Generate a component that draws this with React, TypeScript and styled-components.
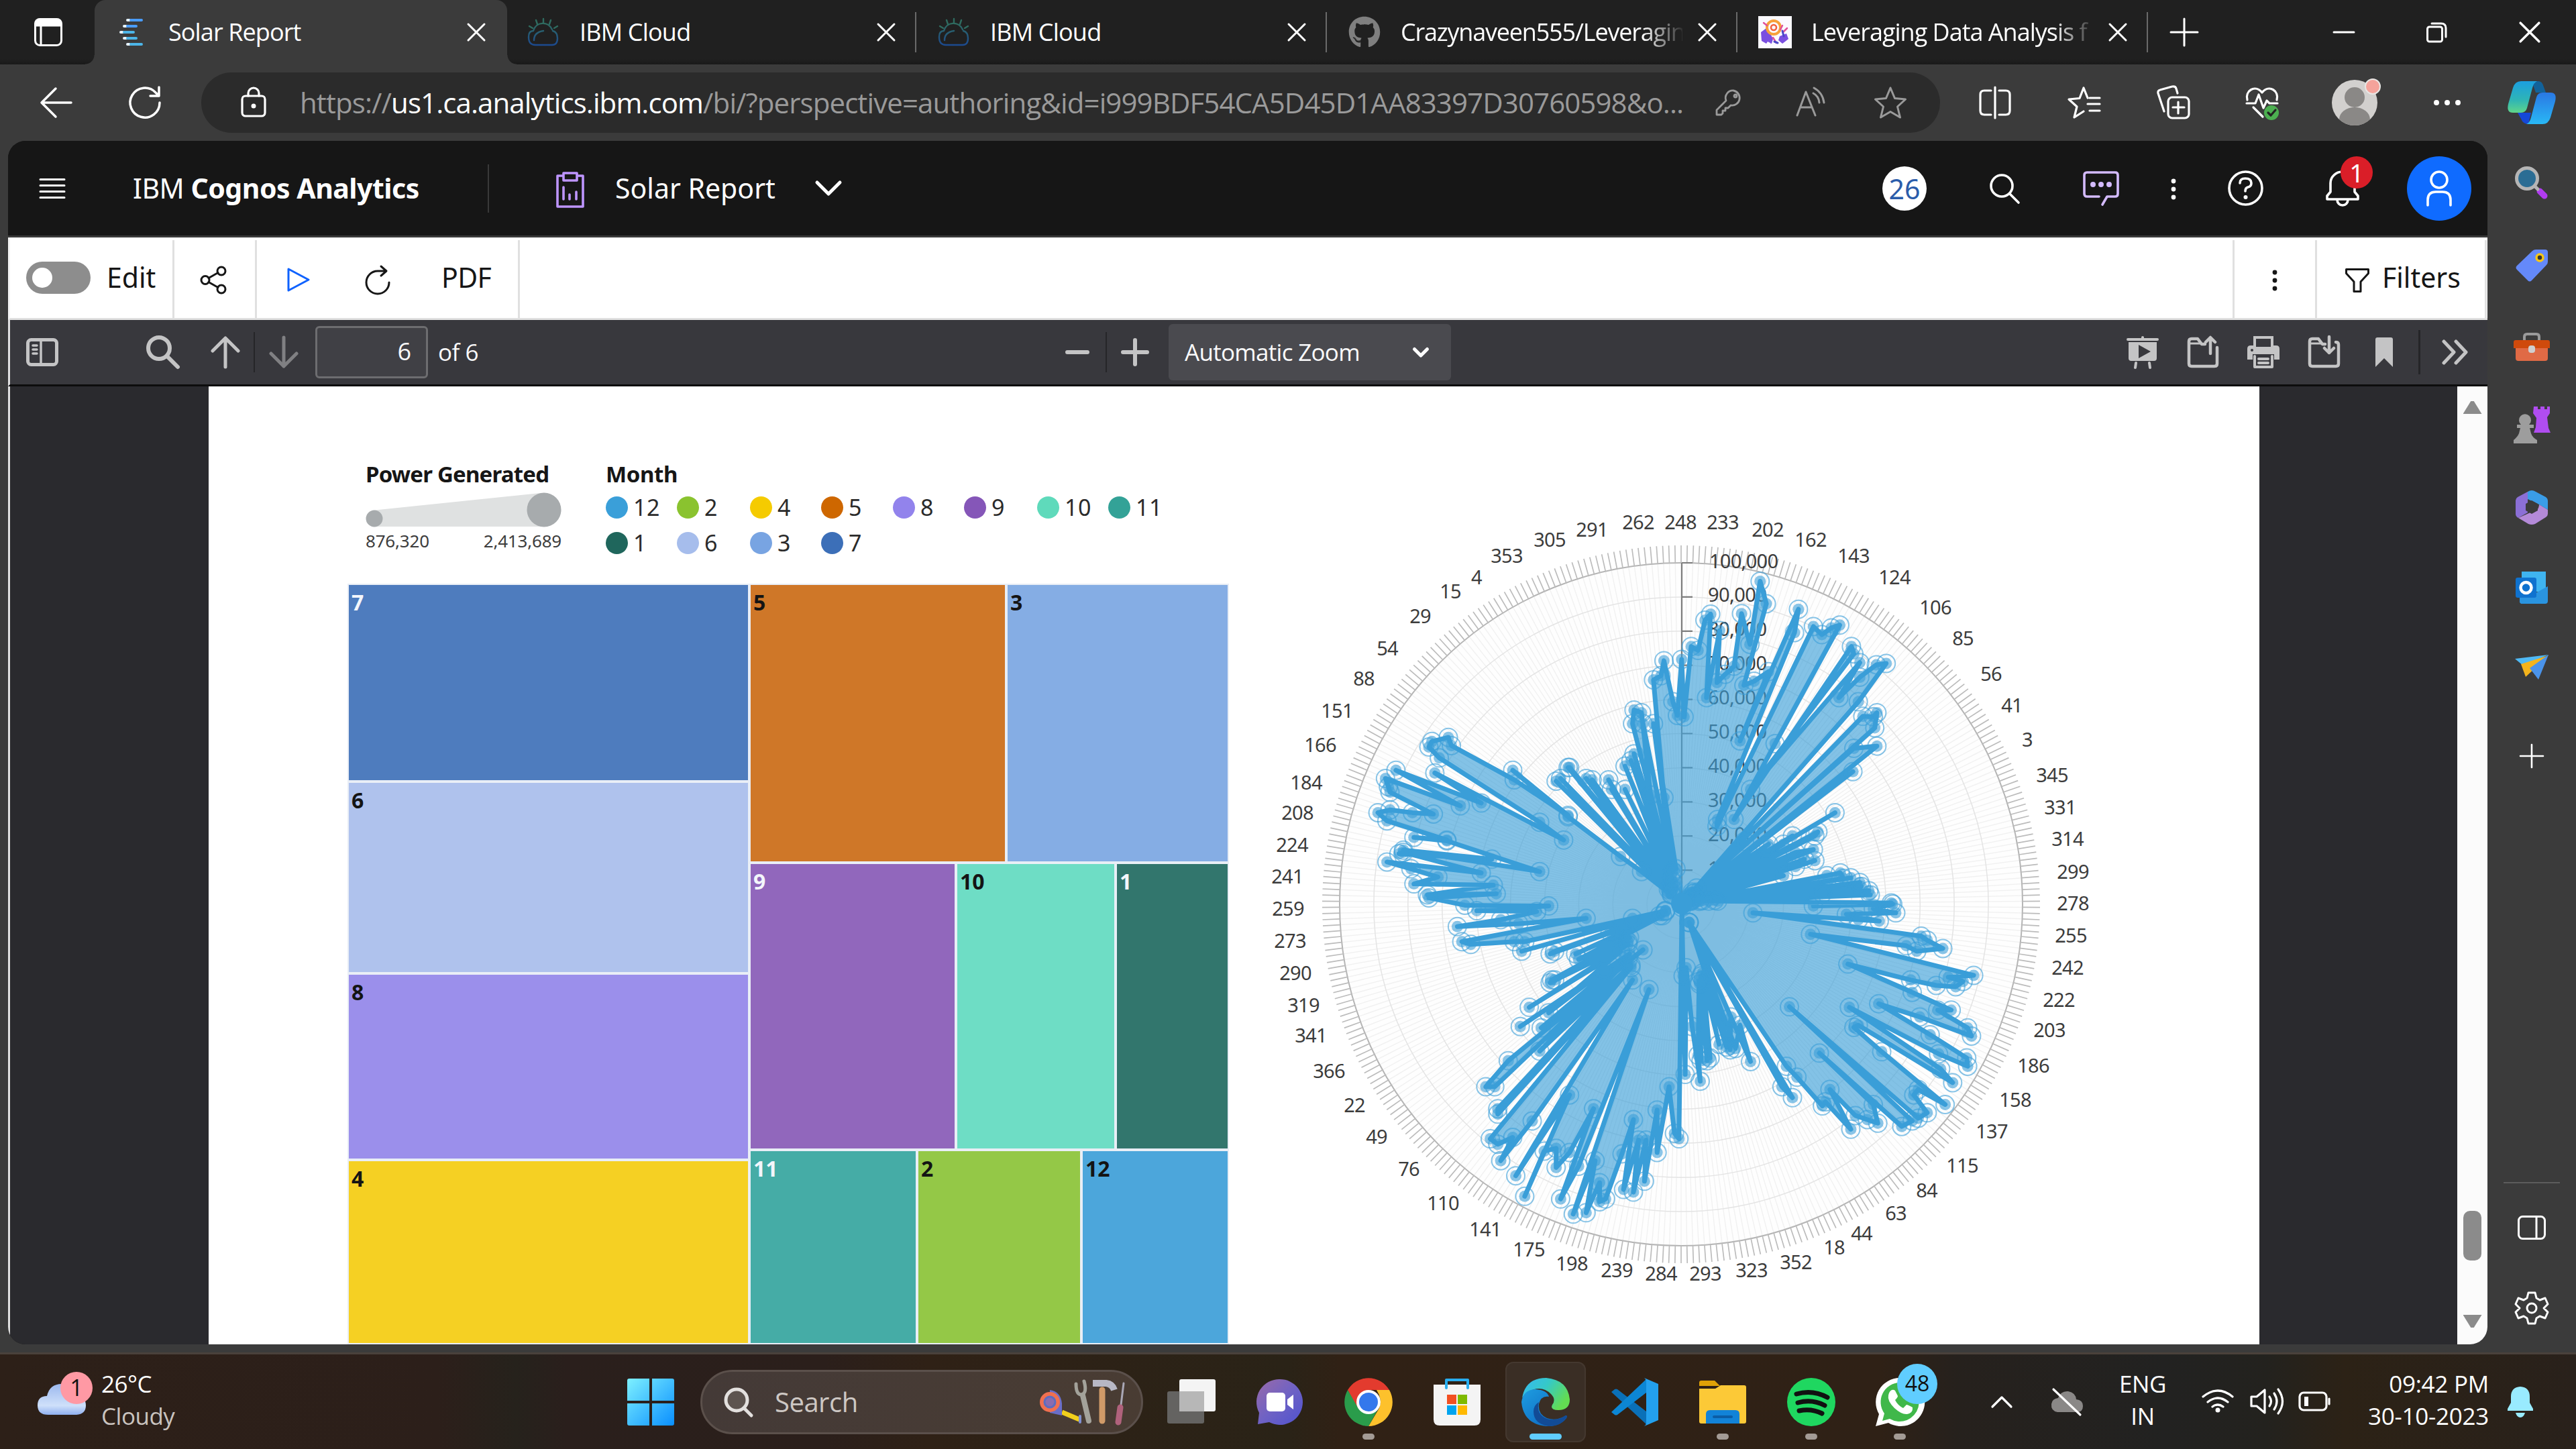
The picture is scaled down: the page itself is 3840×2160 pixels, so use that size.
import React from 'react';
import styled, { createGlobalStyle } from 'styled-components';
import { FaGithub } from 'react-icons/fa';

const GlobalStyle = createGlobalStyle`
  * { box-sizing: border-box; }
  body { margin: 0; background: #202020; }
`;

const UI = `"Open Sans", "Noto Sans", sans-serif`;
const PLEX = `"Noto Sans", "Open Sans", sans-serif`;

/* ---------- primitives ---------- */

const Glyph = styled.svg<{ $w: number; $h?: number; $ml?: number; $dy?: number }>`
  display: block;
  flex: none;
  width: ${(p) => p.$w}px;
  height: ${(p) => p.$h ?? p.$w}px;
  margin-left: ${(p) => p.$ml ?? 0}px;
  margin-top: ${(p) => (p.$dy ?? 0) * 2}px;
  overflow: visible;
  fill: none;
  stroke-linecap: round;
  stroke-linejoin: round;
`;

const Label = styled.span<{
  $ml?: number; $size: number; $ls?: number; $color?: string; $font?: string; $weight?: number; $w?: number; $dy?: number;
}>`
  flex: none;
  white-space: nowrap;
  margin-left: ${(p) => p.$ml ?? 0}px;
  margin-top: ${(p) => (p.$dy ?? 0) * 2}px;
  width: ${(p) => (p.$w ? `${p.$w}px` : 'auto')};
  font-family: ${(p) => p.$font ?? UI};
  font-size: ${(p) => p.$size}px;
  line-height: 1.3;
  letter-spacing: ${(p) => p.$ls ?? 0}px;
  font-weight: ${(p) => p.$weight ?? 400};
  color: ${(p) => p.$color ?? '#fff'};
`;

const Divider = styled.div<{ $h: number; $w?: number; $ml?: number; $color: string; $end?: boolean }>`
  flex: none;
  width: ${(p) => p.$w ?? 3}px;
  height: ${(p) => p.$h}px;
  margin-left: ${(p) => p.$ml ?? 0}px;
  background: ${(p) => p.$color};
  align-self: ${(p) => (p.$end ? 'flex-end' : 'center')};
`;

const Screen = styled.div`
  width: 3840px;
  height: 2160px;
  display: flex;
  flex-direction: column;
  background: #3b3b3b;
  overflow: hidden;
`;

/* ---------- tab strip ---------- */

const TabStrip = styled.div`
  height: 96px;
  flex: none;
  display: flex;
  align-items: center;
  background: linear-gradient(#202020 88px, #191919);
`;

const Tab = styled.div<{ $w: number; $active?: boolean; $ml?: number }>`
  position: relative;
  flex: none;
  width: ${(p) => p.$w}px;
  height: 96px;
  margin-left: ${(p) => p.$ml ?? 0}px;
  display: flex;
  align-items: center;
  background: ${(p) => (p.$active ? '#3b3b3b' : 'transparent')};
  border-radius: 16px 16px 0 0;
  &::before, &::after {
    content: ${(p) => (p.$active ? '""' : 'none')};
    position: absolute;
    bottom: 0;
    width: 14px;
    height: 14px;
  }
  &::before { left: -14px; background: radial-gradient(circle at 0 0, transparent 13px, #3b3b3b 14px); }
  &::after { right: -14px; background: radial-gradient(circle at 100% 0, transparent 13px, #3b3b3b 14px); }
`;

const Favicon = styled.div<{ $ml: number }>`
  flex: none;
  width: 48px;
  height: 48px;
  margin-left: ${(p) => p.$ml}px;
  display: flex;
  align-items: center;
  justify-content: center;
  color: #7f7f7f;
`;

const TabTitle = styled.div<{ $fade?: boolean; $ls: number }>`
  flex: none;
  width: 420px;
  margin-left: 30px;
  white-space: nowrap;
  font: 36px/50px ${UI};
  letter-spacing: ${(p) => p.$ls}px;
  color: #fff;
  mask-image: ${(p) => (p.$fade ? 'linear-gradient(90deg, #000 360px, transparent 424px)' : 'none')};
`;

const TabEdge = styled.div`
  width: 2px;
  height: 60px;
  margin-left: auto;
  background: #6a6a6a;
`;

const CloseIcon = ({ ml = 0, s = 26 }: { ml?: number; s?: number }) => (
  <Glyph $w={s} $ml={ml} viewBox="0 0 26 26" stroke="#fff" strokeWidth="3">
    <path d="M1 1 25 25M25 1 1 25" />
  </Glyph>
);

const CloudFavicon = () => (
  <Glyph $w={46} $h={42} viewBox="0 0 46 42" stroke="url(#cl)" strokeWidth="2.4">
    <defs>
      <linearGradient id="cl" x1="0" y1="0" x2="0" y2="1">
        <stop offset="0" stopColor="#2f6b5f" /><stop offset="1" stopColor="#1c4a8f" />
      </linearGradient>
    </defs>
    <path d="M11 40h25q8 0 8-10 0-9-7-11M11 40Q1 40 1 28q0-9 7-9C12 5 30 4 36 17M9 33q0-12 14-14" />
    <path d="M23 1v6M12 3l2 6M34 3l-2 6M2 12l5 3M44 12l-5 3" stroke="#2f6b5f" />
  </Glyph>
);

const ReportFavicon = () => (
  <Glyph $w={40} viewBox="0 0 40 40" strokeLinecap="butt" strokeWidth="4">
    <path stroke="#e8f4ff" d="M13 2h3M8 11h3M3 20h3M8 29h3M13 38h3" />
    <path stroke="#4a9dff" d="M18 2h16M13 11h13" />
    <path stroke="#4cb5e8" d="M8 20h14M13 29h13M18 38h16" />
  </Glyph>
);

const ProjectFavicon = () => (
  <Glyph $w={50} $h={48} viewBox="0 0 50 48">
    <path fill="#fbfaff" d="M0 0h50v48H0z" />
    <path fill="#7a4fe0" d="M4 24l8-6 5 6 5 10-2 7-6-3-2 3-7-4zM32 30l10-4 3 8-5 4-4 3-6-5zM16 34h4l-1 8z" />
    <circle cx="23" cy="17" r="10" stroke="#f7a13a" strokeWidth="4" />
    <circle cx="23" cy="17" r="4" stroke="#f2603c" strokeWidth="2.500" />
    <path stroke="#e0509a" strokeWidth="2.500" d="M8 10l5 4M36 14l-3 6M43 18l-6 6M22 32l5 8" />
    <path stroke="#4a48c8" strokeWidth="3" d="M36 22l2 8M24 38l5 2" />
  </Glyph>
);

const Titlebar = () => (
  <TabStrip>
    <Glyph $w={42} $ml={51} viewBox="0 0 42 42" stroke="#fff" strokeWidth="3">
      <rect x="1.5" y="1.5" width="39" height="39" rx="7" />
      <path fill="#fff" d="M2 11V8q0-6 6-6h26q6 0 6 6v3z" />
      <path d="M10 11v29" />
    </Glyph>
    <Tab $w={615} $ml={48} $active>
      <Favicon $ml={32}><ReportFavicon /></Favicon>
      <TabTitle $ls={-0.9}>Solar Report</TabTitle>
      <CloseIcon ml={26} />
    </Tab>
    <Tab $w={610}>
      <Favicon $ml={30}><CloudFavicon /></Favicon>
      <TabTitle $ls={-0.8}>IBM Cloud</TabTitle>
      <CloseIcon ml={24} />
      <TabEdge />
    </Tab>
    <Tab $w={612}>
      <Favicon $ml={32}><CloudFavicon /></Favicon>
      <TabTitle $ls={-0.8}>IBM Cloud</TabTitle>
      <CloseIcon ml={24} />
      <TabEdge />
    </Tab>
    <Tab $w={612}>
      <Favicon $ml={32}><FaGithub size={48} /></Favicon>
      <TabTitle $ls={-1.2} $fade>Crazynaveen555/Leveragin</TabTitle>
      <CloseIcon ml={24} />
      <TabEdge />
    </Tab>
    <Tab $w={612}>
      <Favicon $ml={32}><ProjectFavicon /></Favicon>
      <TabTitle $ls={-1} $fade>Leveraging Data Analysis f</TabTitle>
      <CloseIcon ml={24} />
      <TabEdge />
    </Tab>
    <Glyph $w={42} $ml={33} viewBox="0 0 42 42" stroke="#fff" strokeWidth="3">
      <path d="M21 1v40M1 21h40" />
    </Glyph>
    <Glyph $w={30} $ml={202} viewBox="0 0 30 30" stroke="#fff" strokeWidth="3" strokeLinecap="butt">
      <path d="M0 15h30" />
    </Glyph>
    <Glyph $w={30} $ml={108} viewBox="0 0 30 30" stroke="#fff" strokeWidth="3">
      <rect x="1.5" y="7" width="22" height="22" rx="3" />
      <path d="M8 2h14q7 0 7 7v13" />
    </Glyph>
    <CloseIcon ml={109} s={30} />
  </TabStrip>
);

/* ---------- address bar ---------- */

const NavRow = styled.div`
  height: 114px;
  flex: none;
  display: flex;
  align-items: center;
`;

const AddressPill = styled.div`
  flex: none;
  width: 2592px;
  height: 90px;
  margin-left: 60px;
  border-radius: 45px;
  background: #2b2b2b;
  display: flex;
  align-items: center;
`;

const Url = styled.div`
  flex: none;
  width: 2064px;
  margin-left: 50px;
  white-space: nowrap;
  font: 42px/60px ${UI};
  letter-spacing: -0.9px;
  color: #9a9a9a;
  b { font-weight: 400; color: #fff; }
`;

const star = 'M24 2l6.5 15.500 16 1.500-12 11 4 16L24 37.500 9.500 46l4-16-12-11 16-1.500z';

const AddressBar = () => (
  <NavRow>
    <Glyph $w={48} $ml={60} viewBox="0 0 48 48" stroke="#fff" strokeWidth="3.5">
      <path d="M46 24H2M23 3 2 24l21 21" />
    </Glyph>
    <Glyph $w={48} $ml={84} viewBox="0 0 48 48" stroke="#fff" strokeWidth="3.5">
      <path d="M46 24a22 22 0 1 1-6-15l5 5M45 1v13H32" />
    </Glyph>
    <AddressPill>
      <Glyph $w={38} $h={46} $ml={59} $dy={-1} viewBox="0 0 38 46" stroke="#fff" strokeWidth="3.2">
        <rect x="2" y="14" width="34" height="30" rx="5" />
        <path d="M11 14v-4a8 8 0 0 1 16 0v4" />
        <circle cx="19" cy="29" r="3.500" fill="#fff" stroke="none" />
      </Glyph>
      <Url>
        https://<b>us1.ca.analytics.ibm.com</b>/bi/?perspective=authoring&amp;id=i999BDF54CA5D45D1AA83397D30760598&amp;o...
      </Url>
      <Glyph $w={40} $ml={46} viewBox="0 0 40 40" stroke="#9a9a9a" strokeWidth="2.8">
        <path d="M27 2a11 11 0 1 1-4 22l-4 4h-4v4h-4v4l-2 2H2v-7l14-14A11 11 0 0 1 27 2z" />
        <circle cx="30" cy="10" r="2" />
      </Glyph>
      <Glyph $w={46} $h={44} $ml={80} $dy={-1} viewBox="0 0 46 44" stroke="#9a9a9a" strokeWidth="3">
        <path d="M2 42 15 7l14 35M7 30h17M27 1q13 7 15 22M26 9q8 4 9 14" />
      </Glyph>
      <Glyph $w={48} $ml={71} viewBox="0 0 48 48" stroke="#9a9a9a" strokeWidth="3"><path d={star} /></Glyph>
    </AddressPill>
    <Glyph $w={48} $ml={58} viewBox="0 0 48 48" stroke="#fff" strokeWidth="3.2">
      <path d="M24 1v46M18 6H8q-6 0-6 6v24q0 6 6 6h10M30 6h10q6 0 6 6v24q0 6-6 6H30" />
    </Glyph>
    <Glyph $w={50} $ml={84} viewBox="0 0 50 48" stroke="#fff" strokeWidth="3.2">
      <path d="M24 37 10 46l4-16-12-11 16-1.500L24 2l6 15M33 17h15M30 26h18M33 36h15" />
    </Glyph>
    <Glyph $w={50} $ml={83} viewBox="0 0 50 50" stroke="#fff" strokeWidth="3.2">
      <rect x="17" y="17" width="31" height="31" rx="6" />
      <path d="M32 24v17M24 32h17M11 38 2 11q-1-4 3-5l18-5q5-1 6 3l2 7" />
    </Glyph>
    <Glyph $w={50} $ml={82} viewBox="0 0 50 50" stroke="#fff" strokeWidth="3.2">
      <path d="M3 21C-1 8 14-3 25 10 36-3 51 8 47 21M2 26h13l5-13 7 20 5-11 4 4h12M12 32l14 14" />
      <circle cx="39" cy="40" r="11" fill="#4caf50" stroke="none" /><path stroke="#222" d="M34 40l4 4 7-8" />
    </Glyph>
    <Glyph $w={70} $ml={78} viewBox="0 0 70 70">
      <circle cx="35" cy="35" r="34" fill="#d2d0ce" />
      <path fill="#8a8886" d="M12 60a23 18 0 0 1 46 0 34 34 0 0 1-46 0z" />
      <circle cx="35" cy="27" r="15" fill="#8a8886" />
      <circle cx="62" cy="11" r="11" fill="#f5a39b" stroke="#e8e6e4" strokeWidth="2" />
    </Glyph>
    <Glyph $w={40} $h={10} $ml={83} viewBox="0 0 40 10">
      <g fill="#fff"><circle cx="4" cy="5" r="4" /><circle cx="20" cy="5" r="4" /><circle cx="36" cy="5" r="4" /></g>
    </Glyph>
    <Glyph $w={72} $h={64} $ml={70} viewBox="0 0 72 64">
      <defs>
        <linearGradient id="cpA" x1="0" y1="0" x2="0" y2="1"><stop stopColor="#1b9fe0" /><stop offset=".6" stopColor="#2fb5b5" /><stop offset="1" stopColor="#5fd58a" /></linearGradient>
        <linearGradient id="cpB" x1="0" y1="0" x2="0" y2="1"><stop stopColor="#2a78e4" /><stop offset="1" stopColor="#29b8f5" /></linearGradient>
      </defs>
      <path fill="#12629a" d="M36 0h10q5 0 7 6l4 11H42z" />
      <path fill="#1548d8" d="M15 47h20l-4 17q-8 0-11-8z" />
      <path fill="url(#cpA)" d="M20 0h24q-5 2-7 10l-8 30q-2 7-9 7H8Q-2 47 1 34L8 10Q11 0 20 0z" />
      <path fill="url(#cpB)" d="M52 64H28q5-2 7-10l8-30q2-7 9-7h12q10 0 7 13l-7 24q-3 10-12 10z" />
    </Glyph>
  </NavRow>
);

/* ---------- Cognos app ---------- */

const Body = styled.div`
  height: 1794px;
  flex: none;
  display: flex;
  padding-left: 12px;
`;

const AppPanel = styled.div`
  width: 3696px;
  flex: none;
  display: flex;
  flex-direction: column;
  border-radius: 26px;
  overflow: hidden;
  background: #161616;
`;

const AppHeader = styled.div`
  height: 144px;
  flex: none;
  display: flex;
  align-items: center;
  background: #161616;
  border-bottom: 3px solid #393939;
`;

const CountBadge = styled.div`
  flex: none;
  width: 66px;
  height: 66px;
  margin-left: 1552px;
  border-radius: 50%;
  background: #fff;
  display: flex;
  align-items: center;
  justify-content: center;
  font: 41px/66px ${PLEX};
  color: #2a5caa;
`;

const Bell = styled.div`
  position: relative;
  flex: none;
  margin-left: 93px;
`;

const AlertBadge = styled.span`
  position: absolute;
  left: 22px;
  top: -22px;
  width: 48px;
  height: 48px;
  border-radius: 50%;
  background: #da1e28;
  color: #fff;
  text-align: center;
  font: 38px/48px ${PLEX};
`;

const Avatar = styled.div`
  flex: none;
  width: 96px;
  height: 96px;
  margin-left: 71px;
  border-radius: 50%;
  background: #0f6bff;
  display: flex;
  align-items: center;
  justify-content: center;
`;

const Header = () => (
  <AppHeader>
    <Glyph $w={36} $h={30} $ml={48} viewBox="0 0 36 30" stroke="#fff" strokeWidth="3" strokeLinecap="butt">
      <path d="M0 1.500h36M0 10.500h36M0 19.500h36M0 28.500h36" />
    </Glyph>
    <Label $ml={102} $w={426} $size={41} $font={PLEX} $ls={-0.5}>IBM <b>Cognos Analytics</b></Label>
    <Divider $h={72} $ml={103} $w={2} $color="#393939" />
    <Glyph $w={42} $h={54} $ml={100} $dy={2} viewBox="0 0 42 54" stroke="#be95ff" strokeWidth="3.600">
      <path d="M11 6H2v46h38V6h-9M11 2h20v11H11zM11 23v18M20 34v7M30 30v11" />
    </Glyph>
    <Label $ml={46} $w={240} $size={41} $font={PLEX} $ls={0}>Solar Report</Label>
    <Glyph $w={38} $h={21} $ml={59} viewBox="0 0 38 21" stroke="#fff" strokeWidth="5" strokeLinecap="butt">
      <path d="M2 2l17 17L36 2" />
    </Glyph>
    <CountBadge>26</CountBadge>
    <Glyph $w={44} $ml={94} viewBox="0 0 44 44" stroke="#fff" strokeWidth="3.600">
      <circle cx="18" cy="18" r="16" /><path d="M30 30l13 13" />
    </Glyph>
    <Glyph $w={54} $h={50} $ml={95} viewBox="0 0 54 50" stroke="#d4bbff" strokeWidth="3.600">
      <path d="M24 37H6q-4 0-4-4V5q0-4 4-4h42q4 0 4 4v28q0 4-4 4H36l-7 12" />
      <g fill="#d4bbff" stroke="none"><circle cx="15" cy="19" r="4" /><circle cx="27" cy="19" r="4" /><circle cx="39" cy="19" r="4" /></g>
    </Glyph>
    <Glyph $w={8} $h={30} $ml={77} $dy={1} viewBox="0 0 8 30">
      <g fill="#fff"><circle cx="4" cy="3" r="3.400" /><circle cx="4" cy="15" r="3.400" /><circle cx="4" cy="27" r="3.400" /></g>
    </Glyph>
    <Glyph $w={53} $ml={77} viewBox="0 0 53 53" stroke="#fff" strokeWidth="3.600">
      <circle cx="26.500" cy="26.500" r="24.500" />
      <path d="M18 19q0-7 8-7 9 0 9 7 0 5-5 6-4 1-4 6" />
      <circle cx="26.500" cy="40" r="3" fill="#fff" stroke="none" />
    </Glyph>
    <Bell>
      <Glyph $w={50} $h={52} viewBox="0 0 50 52" stroke="#fff" strokeWidth="3.600">
        <path d="M2 42h46v-5l-5-6V18a18 17 0 0 0-36 0v13l-5 6zM17 43a8 8 0 0 0 16 0" />
      </Glyph>
      <AlertBadge>1</AlertBadge>
    </Bell>
    <Avatar>
      <Glyph $w={38} $h={54} viewBox="0 0 38 54" stroke="#fff" strokeWidth="3.600">
        <circle cx="19" cy="14" r="12" /><path d="M2 52V44q0-12 12-12h10q12 0 12 12v8" />
      </Glyph>
    </Avatar>
  </AppHeader>
);

const ReportBar = styled.div`
  height: 123px;
  flex: none;
  display: flex;
  align-items: center;
  background: #fff;
  border-bottom: 3px solid #e0e0e0;
  border-left: 3px solid #f4f4f4;
`;

const Toggle = styled.div`
  flex: none;
  width: 96px;
  height: 48px;
  margin-left: 24px;
  padding: 9px;
  border-radius: 24px;
  background: #8d8d8d;
  &::before {
    content: "";
    display: block;
    width: 30px;
    height: 30px;
    border-radius: 50%;
    background: #fff;
  }
`;

const Toolbar = () => (
  <ReportBar>
    <Toggle />
    <Label $ml={24} $w={76} $size={41} $font={PLEX} $color="#161616">Edit</Label>
    <Divider $h={116} $ml={22} $color="#e0e0e0" $end />
    <Glyph $w={40} $h={43} $ml={38} $dy={3} viewBox="0 0 40 43" stroke="#161616" strokeWidth="3">
      <circle cx="32" cy="8" r="6" /><circle cx="8" cy="21.500" r="6" /><circle cx="32" cy="35" r="6" />
      <path d="M13 18.500l14-8M13 24.500l14 8" />
    </Glyph>
    <Divider $h={116} $ml={42} $color="#e0e0e0" $end />
    <Glyph $w={34} $h={36} $ml={45} $dy={3} viewBox="0 0 34 36" stroke="#0f62fe" strokeWidth="3">
      <path d="M2 2l30 16L2 34z" />
    </Glyph>
    <Glyph $w={38} $h={44} $ml={82} $dy={3} viewBox="0 0 38 44" stroke="#161616" strokeWidth="3">
      <path d="M36 26a17 17 0 1 1-17-17h12M24 2l8 7-8 7" />
    </Glyph>
    <Label $ml={76} $w={78} $size={41} $font={PLEX} $ls={-0.6} $color="#161616">PDF</Label>
    <Divider $h={116} $ml={36} $color="#e0e0e0" $end />
    <Divider $h={116} $ml={2553} $color="#e0e0e0" $end />
    <Glyph $w={8} $h={30} $ml={56} $dy={4} viewBox="0 0 8 30">
      <g fill="#161616"><circle cx="4" cy="3" r="3.400" /><circle cx="4" cy="15" r="3.400" /><circle cx="4" cy="27" r="3.400" /></g>
    </Glyph>
    <Divider $h={116} $ml={56} $color="#e0e0e0" $end />
    <Glyph $w={36} $h={36} $ml={42} $dy={4} viewBox="0 0 36 36" stroke="#161616" strokeWidth="3">
      <path d="M1.500 1.500h33v6L23 20v14.500H13V20L1.500 7.500z" />
    </Glyph>
    <Label $ml={19} $w={120} $size={41} $font={PLEX} $ls={0} $color="#161616">Filters</Label>
    <Divider $h={116} $ml={33} $color="#e0e0e0" $end />
  </ReportBar>
);

/* ---------- PDF viewer ---------- */

const PdfBar = styled.div`
  height: 99px;
  flex: none;
  display: flex;
  align-items: center;
  background: #38383d;
  border-bottom: 3px solid #0c0c0d;
  border-left: 3px solid #e0e0e0;
`;

const PageInput = styled.div`
  flex: none;
  width: 168px;
  height: 78px;
  margin-left: 25px;
  padding-right: 22px;
  border: 3px solid #6d6d70;
  border-radius: 6px;
  background: #404045;
  color: #f9f9fa;
  text-align: right;
  font: 36px/70px ${UI};
`;

const ZoomSelect = styled.div`
  flex: none;
  width: 421px;
  height: 84px;
  margin-left: 29px;
  padding: 0 33px 0 24px;
  border-radius: 6px;
  background: #4a4a4f;
  display: flex;
  align-items: center;
  justify-content: space-between;
`;

const grey = '#c4c4c5';

const PdfToolbar = () => (
  <PdfBar>
    <Glyph $w={48} $h={42} $ml={24} viewBox="0 0 48 42" stroke={grey} strokeWidth="5">
      <rect x="2.500" y="2.500" width="43" height="37" rx="5" />
      <path strokeWidth="3.500" d="M22 4v34M10 11h6M10 17h6M10 23h6" />
    </Glyph>
    <Glyph $w={50} $h={50} $ml={131} viewBox="0 0 50 50" stroke={grey} strokeWidth="6">
      <circle cx="19" cy="19" r="16" /><path d="M31 31l16 16" />
    </Glyph>
    <Glyph $w={44} $h={48} $ml={46} viewBox="0 0 44 48" stroke={grey} strokeWidth="5">
      <path d="M22 46V3M3 22 22 3l19 19" />
    </Glyph>
    <Divider $h={60} $ml={20} $w={2} $color="#252528" />
    <Glyph $w={44} $h={48} $ml={21} viewBox="0 0 44 48" stroke="#808083" strokeWidth="5">
      <path d="M22 2v43M3 26l19 19 19-19" />
    </Glyph>
    <PageInput>6</PageInput>
    <Label $ml={15} $w={70} $size={35} $ls={-0.5} $color="#f9f9fa">of 6</Label>
    <Glyph $w={36} $h={6} $ml={865} viewBox="0 0 36 6" stroke={grey} strokeWidth="6"><path d="M3 3h30" /></Glyph>
    <Divider $h={60} $ml={24} $w={2} $color="#252528" />
    <Glyph $w={42} $ml={21} viewBox="0 0 42 42" stroke={grey} strokeWidth="6"><path d="M3 21h36M21 3v36" /></Glyph>
    <ZoomSelect>
      <Label $size={35} $ls={-0.7} $dy={-0.5} $color="#f9f9fa">Automatic Zoom</Label>
      <Glyph $w={24} $h={15} viewBox="0 0 24 15" stroke="#fff" strokeWidth="5"><path d="M2.500 2.500 12 12l9.500-9.500" /></Glyph>
    </ZoomSelect>
    <Glyph $w={48} $ml={1007} viewBox="0 0 48 48" stroke={grey} strokeWidth="4">
      <path d="M2 5h44M24 2v2M14 40l-1 7M34 40l1 7" />
      <path fill={grey} stroke="none" fillRule="evenodd" d="M3 9h42v24q0 4-4 4H7q-4 0-4-4zM18 13v20l18-10z" />
    </Glyph>
    <Glyph $w={48} $ml={42} viewBox="0 0 48 48" stroke={grey} strokeWidth="5">
      <path d="M45 17v24q0 4-4 4H7q-4 0-4-4V8q0-4 4-4h9l6 8h5M35 26V3M28 9l7-7 7 7" strokeWidth="4.500" />
      <path d="M4 11h18" strokeWidth="3" />
    </Glyph>
    <Glyph $w={48} $ml={42} viewBox="0 0 48 48">
      <path fill={grey} d="M9 0h30v14h4q5 0 5 5v16h-8v-8H8v8H0V19q0-5 5-5h4zM13 4v12h22V4z" fillRule="evenodd" />
      <path stroke={grey} strokeWidth="4" d="M11 30v16h26V30M17 34h14M17 40h14" />
      <circle cx="7" cy="21" r="2" fill="#38383d" />
    </Glyph>
    <Glyph $w={48} $ml={42} viewBox="0 0 48 48" stroke={grey} strokeWidth="4.500">
      <path d="M42 9q4 0 4 4v28q0 4-4 4H7q-4 0-4-4V8q0-4 4-4h9l6 8h4M32 1v24M25 18l7 7 7-7" />
      <path d="M4 11h18" strokeWidth="3" />
    </Glyph>
    <Glyph $w={26} $h={44} $ml={53} viewBox="0 0 26 44"><path fill={grey} d="M0 3q0-3 3-3h20q3 0 3 3v41L13 31 0 44z" /></Glyph>
    <Divider $h={66} $ml={38} $w={3} $color="#252528" />
    <Glyph $w={40} $h={36} $ml={32} viewBox="0 0 40 36" stroke={grey} strokeWidth="5">
      <path d="M3 2l15 16L3 34M21 2l15 16-15 16" />
    </Glyph>
  </PdfBar>
);

const Viewer = styled.div`
  height: 1428px;
  flex: none;
  display: flex;
  justify-content: space-between;
  background: #2a2a2e;
  border-left: 3px solid #e0e0e0;
`;

const Paper = styled.div`
  width: 3057px;
  margin-left: 296px;
  height: 1428px;
  background: #fff;
  display: flex;
  align-items: flex-start;
  overflow: hidden;
`;

const ScrollTrack = styled.div`
  width: 45px;
  background: #fbfbfb;
  display: flex;
  flex-direction: column;
  align-items: center;
`;

const Arrow = styled.div<{ $down?: boolean }>`
  width: 28px;
  height: 19px;
  margin-top: ${(p) => (p.$down ? 81 : 22)}px;
  background: #8b8b8b;
  clip-path: ${(p) => (p.$down ? 'polygon(0 0, 100% 0, 58% 100%, 42% 100%)' : 'polygon(42% 0, 58% 0, 100% 100%, 0 100%)')};
`;

const Thumb = styled.div`
  width: 27px;
  height: 74px;
  margin-top: 1188px;
  border-radius: 10px;
  background: #8b8b8b;
`;

const TreemapPanel = styled.div`
  width: 1314px;
  margin-left: 207px;
  padding-top: 110px;
  display: flex;
  flex-direction: column;
  flex: none;
`;

const LegendRow = styled.div`
  height: 184px;
  flex: none;
  display: flex;
  padding-left: 27px;
`;

const LegendBlock = styled.div<{ $w: number }>`
  flex: none;
  width: ${(p) => p.$w}px;
`;

const LegendTitle = styled.div<{ $ls: number }>`
  font: 700 33px/42px ${PLEX};
  letter-spacing: ${(p) => p.$ls}px;
  color: #161616;
`;

const RangeText = styled.div`
  display: flex;
  justify-content: space-between;
  width: 292px;
  margin-top: 3px;
  font: 26px/30px ${PLEX};
  letter-spacing: -0.2px;
  color: #3d3d3d;
`;

const MonthGrid = styled.div`
  display: grid;
  grid-template-columns: 106px 109px 106px 107px 106px 109px 106px 106px;
  grid-auto-rows: 53px;
  margin-top: 2px;
`;

const MonthItem = styled.div<{ $c: string }>`
  display: flex;
  align-items: center;
  gap: 8px;
  font: 34px/53px ${PLEX};
  letter-spacing: 0.5px;
  color: #2b2b2b;
  &::before {
    content: "";
    width: 33px;
    height: 33px;
    border-radius: 50%;
    background: ${(p) => p.$c};
  }
`;

const Treemap = styled.div`
  display: flex;
  height: 1134px;
`;

const TreeCol = styled.div<{ $w: number }>`
  width: ${(p) => p.$w}px;
  display: flex;
  flex-direction: column;
`;

const TreeRow = styled.div<{ $h: number }>`
  height: ${(p) => p.$h}px;
  display: flex;
  flex: none;
`;

const Tile = styled.div<{ $c: string; $w?: number; $h?: number; $light?: boolean }>`
  flex: none;
  width: ${(p) => (p.$w ? `${p.$w}px` : '100%')};
  height: ${(p) => (p.$h ? `${p.$h}px` : '100%')};
  border: 2px solid #e9eef6;
  background: ${(p) => p.$c};
  padding: 4px 0 0 4px;
  font: 700 32px/44px ${PLEX};
  color: ${(p) => (p.$light ? '#f3f6fb' : '#141414')};
`;

const months: [string, string][] = [
  ['12', '#3a9fd9'], ['2', '#8ac32f'], ['4', '#f5cb00'], ['5', '#ce6700'], ['8', '#9283ec'], ['9', '#8556b8'],
  ['10', '#5fdabb'], ['11', '#33a297'], ['1', '#1f665c'], ['6', '#a6bdec'], ['3', '#78a4e2'], ['7', '#3c6fb8'],
];

const TreemapWidget = () => (
  <TreemapPanel>
    <LegendRow>
      <LegendBlock $w={358}>
        <LegendTitle $ls={-0.8}>Power Generated</LegendTitle>
        <Glyph $w={292} $h={56} $dy={2} viewBox="0 0 292 56">
          <path fill="#dfe1e1" d="M9 29 260 3q30 20 4 50H12z" />
          <circle cx="13" cy="41" r="12.500" fill="#a7abad" />
          <circle cx="266" cy="28" r="25.500" fill="#a7abad" />
        </Glyph>
        <RangeText><span>876,320</span><span>2,413,689</span></RangeText>
      </LegendBlock>
      <LegendBlock $w={880}>
        <LegendTitle $ls={-0.4}>Month</LegendTitle>
        <MonthGrid>
          {months.map(([m, c]) => <MonthItem key={m} $c={c}>{m}</MonthItem>)}
        </MonthGrid>
      </LegendBlock>
    </LegendRow>
    <Treemap>
      <TreeCol $w={599}>
        <Tile $c="#4e7cbe" $h={295} $light>7</Tile>
        <Tile $c="#afc2ed" $h={286}>6</Tile>
        <Tile $c="#9b8feb" $h={278}>8</Tile>
        <Tile $c="#f5d023" $h={275}>4</Tile>
      </TreeCol>
      <TreeCol $w={715}>
        <TreeRow $h={416}>
          <Tile $c="#cf7728" $w={383}>5</Tile>
          <Tile $c="#85ade4" $w={332}>3</Tile>
        </TreeRow>
        <TreeRow $h={428}>
          <Tile $c="#9167bc" $w={308} $light>9</Tile>
          <Tile $c="#6eddc5" $w={238}>10</Tile>
          <Tile $c="#32766d" $w={169} $light>1</Tile>
        </TreeRow>
        <TreeRow $h={290}>
          <Tile $c="#45aca6" $w={250} $light>11</Tile>
          <Tile $c="#94c847" $w={245}>2</Tile>
          <Tile $c="#4ca6db" $w={220}>12</Tile>
        </TreeRow>
      </TreeCol>
    </Treemap>
  </TreemapPanel>
);

/* ---------- radial chart ---------- */

const RadialSvg = styled.svg`
  flex: none;
  width: 1300px;
  height: 1200px;
  margin: 164px 0 0 18px;
  font: 29px ${PLEX};
`;

const CX = 2506;
const CY = 1348;
const R = 509;

type Pt = [number, number];

/* Samples are kept per quarter, on a 2.24 x 2.45 grid measured from the quarter's own corner. */
const northEast: Pt[] = [
  [60, 595], [68, 805], [92, 548], [115, 562], [138, 452], [157, 430], [143, 735], [187, 490], [178, 680], [205, 650],
  [235, 620], [260, 428], [288, 540], [322, 310], [343, 392], [268, 690], [302, 675], [350, 640], [255, 893], [450, 412],
  [437, 497], [180, 1180], [178, 1205], [500, 475], [528, 505], [560, 480], [588, 470], [372, 903], [235, 1180], [627, 548],
  [635, 575], [290, 1070], [655, 607], [585, 735], [655, 660], [710, 615], [743, 610], [650, 750], [95, 1445], [665, 803],
  [700, 805], [712, 790], [705, 845], [110, 1430], [635, 920], [712, 912], [90, 1460], [632, 1005], [100, 1450], [270, 1260],
  [100, 1450], [350, 1270], [90, 1465], [340, 1290], [85, 1470], [430, 1240], [90, 1468], [400, 1270], [100, 1462], [572, 1155],
  [100, 1463], [515, 1225], [505, 1240], [90, 1473], [440, 1300], [500, 1290], [90, 1474], [470, 1325], [90, 1475], [505, 1330],
  [95, 1475], [440, 1352], [90, 1477], [400, 1385], [90, 1479], [545, 1385], [120, 1475], [590, 1375], [600, 1395], [130, 1476],
  [625, 1393], [120, 1479], [655, 1410], [150, 1478], [660, 1425], [170, 1475], [685, 1440], [530, 1450], [690, 1455], [180, 1478],
  [760, 1485],
];
const southEast: Pt[] = [
  [500, 75], [765, 68], [700, 85], [775, 100], [610, 105], [720, 130], [650, 125], [298, 100], [860, 185], [880, 200],
  [932, 230], [845, 240], [810, 220], [490, 178], [1035, 328], [950, 335], [1000, 350], [975, 370], [910, 365], [825, 345],
  [615, 287], [830, 390], [960, 455], [915, 455], [1015, 520], [1028, 550], [855, 480], [718, 432], [890, 545], [1012, 630],
  [1015, 660], [918, 615], [620, 445], [925, 670], [965, 720], [650, 510], [635, 518], [728, 607], [940, 800], [850, 745],
  [835, 765], [880, 830], [850, 850], [420, 443], [830, 860], [795, 880], [520, 612], [700, 800], [715, 868], [680, 855],
  [640, 840], [555, 745], [625, 890], [540, 790], [530, 805], [445, 700], [410, 660], [85, 135], [430, 775], [395, 735],
  [85, 135], [290, 643], [255, 510], [240, 595], [85, 135], [222, 600], [225, 480], [210, 590], [130, 320], [185, 580],
  [132, 345], [155, 630], [125, 330], [145, 640], [120, 360], [125, 640], [118, 350], [115, 620], [122, 715], [95, 515],
  [75, 300], [72, 690], [65, 330],
];
const southWest: Pt[] = [
  [1405, 80], [1395, 925], [1380, 905], [1362, 735], [1322, 975], [1322, 820], [1280, 1080], [1285, 930], [1243, 1120], [1260, 930],
  [1210, 1110], [1243, 855], [1205, 980], [1150, 1145], [1130, 1155], [1130, 1085], [1085, 1195], [1115, 1005], [1042, 1200], [1295, 380],
  [1060, 1025], [1000, 1145], [1110, 815], [1030, 975], [985, 1030], [985, 960], [945, 970], [880, 1135], [1030, 765], [850, 1060],
  [1240, 345], [905, 860], [800, 1005], [840, 920], [790, 945], [765, 925], [1235, 300], [790, 835], [790, 815], [1235, 290],
  [930, 605], [1225, 270], [780, 735], [750, 735], [825, 640], [1275, 235], [935, 520], [1230, 250], [865, 515], [1145, 310],
  [960, 465], [1200, 240], [895, 445], [1225, 215], [965, 355], [980, 345], [1225, 205], [970, 345], [1230, 190], [1060, 270],
  [1340, 110], [1050, 250], [1330, 110], [965, 250], [980, 240], [1350, 95], [1165, 170], [1350, 92], [870, 240], [1350, 92],
  [1240, 120], [880, 205], [845, 205], [700, 215], [670, 205], [1085, 120], [860, 140], [655, 150], [800, 125], [920, 95],
  [720, 92], [960, 75], [680, 72], [560, 45], [785, 30],
];
const northWest: Pt[] = [
  [555, 1455], [775, 1420], [510, 1415], [590, 1390], [500, 1360], [420, 1335], [735, 1375], [475, 1300], [460, 1305], [770, 1325],
  [475, 1292], [930, 1370], [620, 1258], [510, 1245], [620, 1255], [420, 1185], [390, 1155], [430, 1145], [505, 1155], [575, 1160],
  [430, 1080], [425, 1060], [415, 1030], [665, 1130], [450, 1000], [735, 1120], [580, 1010], [1010, 1255], [930, 1190], [595, 955],
  [560, 915], [570, 895], [625, 880], [635, 910], [845, 1035], [1025, 1165], [840, 1000], [1025, 1170], [1200, 1315], [1270, 1370],
  [1370, 1455], [985, 1040], [1370, 1452], [1000, 1030], [1360, 1435], [1025, 990], [1370, 1445], [1030, 990], [1365, 1432], [1085, 1030],
  [1370, 1435], [1105, 1035], [1370, 1430], [1160, 1035], [1375, 1435], [1170, 1070], [1375, 1430], [1215, 1070], [1375, 1425], [1215, 985],
  [1370, 1400], [1235, 965], [1375, 1410], [1245, 940], [1370, 1380], [1240, 830], [1245, 780], [1270, 790], [1300, 1090], [1275, 830],
  [1375, 1370], [1310, 830], [1385, 1360], [1345, 1100], [1310, 670], [1335, 655], [1345, 600], [1375, 750], [1390, 800],
];

const place = (pts: Pt[], ox: number, oy: number): Pt[] =>
  pts.map(([x, y]) => [+(ox + x / 2.24).toFixed(1), +(oy + y / 2.45).toFixed(1)]);

const outline: Pt[] = [
  ...place(northEast, 2480, 740),
  ...place(southEast, 2480, 1320),
  ...place(southWest, 1880, 1320),
  ...place(northWest, 1880, 740),
];

const dayLabels: [number, number, number][] = [
  [248, 2505, 778], [233, 2568, 778], [202, 2635, 789], [162, 2699, 804], [143, 2763, 828], [124, 2824, 860], [106, 2885, 905],
  [85, 2926, 951], [56, 2968, 1004], [41, 2999, 1051], [3, 3022, 1102], [345, 3059, 1155], [331, 3071, 1203], [314, 3082, 1250],
  [299, 3090, 1299], [278, 3090, 1346], [255, 3087, 1394], [242, 3082, 1442], [222, 3069, 1490], [203, 3055, 1535],
  [186, 3031, 1588], [158, 3004, 1639], [137, 2969, 1686], [115, 2925, 1737], [84, 2872, 1774], [63, 2826, 1808],
  [44, 2775, 1838], [18, 2734, 1859], [352, 2677, 1881], [323, 2611, 1893], [293, 2542, 1898], [284, 2476, 1898],
  [239, 2410, 1893], [198, 2343, 1883], [175, 2279, 1862], [141, 2214, 1832], [110, 2151, 1793], [76, 2100, 1742],
  [49, 2052, 1694], [22, 2019, 1647], [366, 1981, 1596], [341, 1954, 1543], [319, 1943, 1498], [290, 1931, 1450],
  [273, 1923, 1402], [259, 1920, 1354], [241, 1919, 1306], [224, 1926, 1259], [208, 1934, 1211], [184, 1947, 1166],
  [166, 1968, 1110], [151, 1993, 1059], [88, 2033, 1011], [54, 2068, 966], [29, 2117, 918], [15, 2162, 881],
  [4, 2201, 860], [353, 2246, 828], [305, 2310, 804], [291, 2373, 789], [262, 2442, 778],
];

const rays = (from: number, to: number) =>
  Array.from({ length: 366 }, (_, i) => {
    const a = (i / 366) * Math.PI * 2;
    const s = Math.sin(a);
    const c = -Math.cos(a);
    return `M${(CX + s * from).toFixed(1)} ${(CY + c * from).toFixed(1)}L${(CX + s * to).toFixed(1)} ${(CY + c * to).toFixed(1)}`;
  }).join('');

const steps = Array.from({ length: 10 }, (_, i) => i + 1);
const BLUE = '#3a9ed8';

const RadialChart = () => (
  <RadialSvg viewBox="1850 740 1300 1200">
    <circle cx={CX} cy={CY} r={R} fill="#fefefe" />
    <path d={rays(20, R)} stroke="#000" strokeOpacity="0.05" strokeWidth="1.500" />
    <g fill="none" stroke="#e4e4e4" strokeWidth="1.500">
      {steps.slice(0, 9).map((s) => <circle key={s} cx={CX} cy={CY} r={s * 50.9} />)}
    </g>
    <circle cx={CX} cy={CY} r={R} fill="none" stroke="#b5b5b5" strokeWidth="2" />
    <path d={rays(R, R + 26)} stroke="#bcbcbc" strokeWidth="1.700" />
    <path d={`M${CX + 1} ${CY}V839` + steps.map((s) => `M${CX + 1} ${CY - s * 50.9}h16`).join('')} stroke="#7d7d7d" strokeWidth="2.200" fill="none" />
    <g fill="#3c3c3c" dominantBaseline="central">
      {steps.map((s) => (
        <text key={s} x={s === 10 ? 2548 : 2546} y={1344 - s * 50.9} textLength={s === 10 ? 103 : 88}>
          {`${s * 10},000`}
        </text>
      ))}
    </g>
    <polygon points={outline.map((p) => p.join(',')).join(' ')} fill={BLUE} fillOpacity="0.63" stroke={BLUE} strokeWidth="7" strokeLinejoin="round" />
    <g>
      {outline.map(([x, y], i) => (
        <g key={i}>
          <circle cx={x} cy={y} r="13.500" fill="none" stroke={BLUE} strokeOpacity="0.6" strokeWidth="2" />
          <circle cx={x} cy={y} r="8.500" fill={BLUE} fillOpacity="0.6" />
        </g>
      ))}
    </g>
    <circle cx={CX + 1} cy={CY - 1} r="16" fill={BLUE} />
    <g fill="#3c3c3c" textAnchor="middle" dominantBaseline="central">
      {dayLabels.map(([d, x, y]) => (
        <text key={d} x={x} y={y - 1} letterSpacing="-0.8">{d}</text>
      ))}
    </g>
  </RadialSvg>
);

/* ---------- Edge sidebar ---------- */

const SideRail = styled.div`
  flex: none;
  width: 132px;
  display: flex;
  flex-direction: column;
  align-items: center;
  padding-top: 3px;
`;

const RailItem = styled.div<{ $h?: number }>`
  flex: none;
  height: ${(p) => p.$h ?? 120}px;
  display: flex;
  align-items: center;
`;

const RailRule = styled.div`
  width: 84px;
  height: 3px;
  margin-top: 561px;
  background: #5c5c5c;
`;

const Sidebar = () => (
  <SideRail>
    <RailItem>
      <Glyph $w={50} viewBox="0 0 50 50">
        <path stroke="#b13cf0" strokeWidth="9" d="M37 37l7 7" /><path stroke="#b5b5b5" strokeWidth="5" d="M29 29l5 5" />
        <circle cx="18" cy="18" r="15.500" fill="#2b6d94" stroke="#b5b5b5" strokeWidth="5" />
      </Glyph>
    </RailItem>
    <RailItem>
      <Glyph $w={48} $dy={3} viewBox="0 0 48 48">
        <path fill="#6489fa" d="M25 2q2-2 5-2h14q4 0 4 4v14q0 3-2 5L24 46q-3 3-6 0L2 30q-3-3 0-6z" />
        <circle cx="36" cy="12" r="5" fill="#333" stroke="#f5c518" strokeWidth="3.500" />
      </Glyph>
    </RailItem>
    <RailItem>
      <Glyph $w={54} $h={42} $dy={4} viewBox="0 0 54 42">
        <path stroke="#9a9a9a" strokeWidth="4" d="M16 12V6q0-4 4-4h14q4 0 4 4v6" />
        <path fill="#e06a45" d="M3 20h48v18q0 4-4 4H7q-4 0-4-4z" /><path fill="#cf4a0c" d="M3 11h48q3 0 3 3v9H0v-9q0-3 3-3z" />
        <rect x="22" y="19" width="10" height="11" rx="4" fill="#cfcfcf" />
      </Glyph>
    </RailItem>
    <RailItem>
      <Glyph $w={54} $h={56} $dy={1} viewBox="0 0 54 56">
        <path fill="#b04df0" d="M30 0h6v4h4V0h6v4h4V0h4v10l-4 6 2 16 3 7H30l3-8 1-14-5-7z" />
        <path fill="#9d9d9d" d="M0 55v-5q6-5 8-10l2-8H5v-5h6a9 9 0 1 1 12 0h7v5h-6l2 8q2 6 9 10v5z" />
      </Glyph>
    </RailItem>
    <RailItem>
      <Glyph $w={48} $h={52} $dy={3} viewBox="0 0 48 52">
        <path fill="#8b6fd6" d="M18 3 3 11q-3 2-3 5v20q0 4 4 6l14-8V14z" />
        <path fill="#3a9de8" d="M18 3q6-4 12 0l15 8q3 2 3 6v13l-13-8-17-8z" />
        <path fill="#b48ad8" d="M35 22l13 8v6q0 3-3 5l-16 10q-5 2-10 0L4 42l18-8q13-2 13-12z" />
        <path fill="#3b3b3b" d="M24 16l9 5v10l-9 5-9-5V21z" />
      </Glyph>
    </RailItem>
    <RailItem>
      <Glyph $w={48} $h={48} $dy={3} viewBox="0 0 48 48">
        <path fill="#3fb4f0" d="M9 0h36v30H9z" /><path fill="#1a6fc0" d="M9 14h18v16H9z" />
        <path fill="#2a94e0" d="M6 46V22l20 12 22-12v22q0 4-4 4H8z" />
        <rect y="9" width="31" height="30" rx="3" fill="#0f72cf" /><circle cx="15.500" cy="24" r="8" stroke="#fff" strokeWidth="4.500" />
      </Glyph>
    </RailItem>
    <RailItem>
      <Glyph $w={50} $h={38} $dy={2} viewBox="0 0 50 38">
        <path fill="#4fb9f5" d="M0 6 50 0 12 16z" /><path fill="#f4b41c" d="M9 14 50 1 16 33z" /><path fill="#4a93ea" d="M50 0 22 20l13 17z" />
      </Glyph>
    </RailItem>
    <RailItem $h={148}>
      <Glyph $w={36} viewBox="0 0 36 36" stroke="#fff" strokeWidth="2.600"><path d="M18 1v34M1 18h34" /></Glyph>
    </RailItem>
    <RailRule />
    <RailItem $h={132}>
      <Glyph $w={42} $h={36} viewBox="0 0 42 36" stroke="#fff" strokeWidth="3"><rect x="1.500" y="1.500" width="39" height="33" rx="6" /><path d="M28 2v32" /></Glyph>
    </RailItem>
    <RailItem $h={108}>
      <Glyph $w={50} viewBox="0 0 50 50" stroke="#fff" strokeWidth="3">
        <path d="M20 2h10l2 8 5 3 8-3 4 9-6 6 6 6-4 9-8-3-5 3-2 8H20l-2-8-5-3-8 3-4-9 6-6-6-6 4-9 8 3 5-3z" />
        <circle cx="25" cy="25" r="7" />
      </Glyph>
    </RailItem>
  </SideRail>
);

/* ---------- taskbar ---------- */

const FrameEdge = styled.div`
  height: 12px;
  flex: none;
`;

const TaskRow = styled.div`
  height: 144px;
  flex: none;
  display: flex;
  align-items: center;
  border-top: 3px solid #4a413b;
  background: linear-gradient(90deg, #2d2018 0, #2c1f1a 17%, #26221c 20%, #2a1f1c 22%, #2b1f1b 32%, #2f2116 36%,
    #2a2317 50%, #302115 52%, #2f2116 73%, #26211d 76%, #222221 84%, #23221e 88%, #2c2216 91%, #29211b 100%);
`;

const Weather = styled.div`
  position: relative;
  flex: none;
  margin-left: 56px;
  width: 72px;
`;

const PinkBadge = styled.span`
  position: absolute;
  left: 34px;
  top: -26px;
  width: 48px;
  height: 48px;
  border-radius: 50%;
  background: #ff99a4;
  color: #111;
  text-align: center;
  font: 34px/46px ${UI};
`;

const TwoLines = styled.div<{ $ml: number; $w: number; $align?: string; $ls?: number; $dim?: boolean }>`
  flex: none;
  width: ${(p) => p.$w}px;
  margin-left: ${(p) => p.$ml}px;
  margin-top: -5px;
  display: flex;
  flex-direction: column;
  text-align: ${(p) => p.$align ?? 'left'};
  white-space: nowrap;
  font: 35px/48px ${UI};
  letter-spacing: ${(p) => p.$ls ?? -0.6}px;
  color: #fff;
  span + span { color: ${(p) => (p.$dim ? '#c9c3bf' : '#fff')}; }
`;

const SearchBox = styled.div`
  flex: none;
  width: 660px;
  height: 96px;
  margin-left: 39px;
  border: 3px solid #5b504b;
  border-radius: 48px;
  background: linear-gradient(90deg, #443a37, #493c33);
  display: flex;
  align-items: center;
`;

const AppSlot = styled.div<{ $active?: boolean; $dot?: string; $dotW?: number }>`
  position: relative;
  flex: none;
  width: 120px;
  height: 120px;
  margin-right: 12px;
  display: flex;
  align-items: center;
  justify-content: center;
  border-radius: 12px;
  background: ${(p) => (p.$active ? '#3a2e25' : 'transparent')};
  box-shadow: ${(p) => (p.$active ? 'inset 0 0 0 2px #44382f' : 'none')};
  &::after {
    content: ${(p) => (p.$dot ? '""' : 'none')};
    position: absolute;
    bottom: 4px;
    left: calc(50% - ${(p) => (p.$dotW ?? 18) / 2}px);
    width: ${(p) => p.$dotW ?? 18}px;
    height: 9px;
    border-radius: 5px;
    background: ${(p) => p.$dot};
  }
`;

const CountPill = styled.span`
  position: absolute;
  left: 56px;
  top: 3px;
  width: 60px;
  height: 60px;
  border-radius: 50%;
  background: #60cdff;
  color: #111;
  text-align: center;
  font: 32px/58px ${UI};
`;

const AppRow = styled.div`
  flex: none;
  display: flex;
  margin-left: 12px;
`;

const Taskbar = () => (
  <TaskRow>
    <Weather>
      <Glyph $w={72} $h={46} viewBox="0 0 72 46" $dy={-4}>
        <defs><linearGradient id="wc" x1="0" y1="0" x2="0" y2="1"><stop stopColor="#9bb8ee" /><stop offset=".7" stopColor="#cfe0fa" /><stop offset="1" stopColor="#8fb0f0" /></linearGradient></defs>
        <path fill="url(#wc)" d="M16 46Q0 46 0 32t14-14Q18 0 36 0q20 0 22 18 14 1 14 14T58 46z" />
      </Glyph>
      <PinkBadge>1</PinkBadge>
    </Weather>
    <TwoLines $ml={23} $w={120} $dim $ls={-0.5}><span>26°C</span><span>Cloudy</span></TwoLines>
    <Glyph $w={70} $ml={664} viewBox="0 0 70 70">
      <defs><linearGradient id="win" x1="0" y1="0" x2="1" y2="1"><stop stopColor="#7df0ff" /><stop offset="1" stopColor="#0a8fff" /></linearGradient></defs>
      <path fill="url(#win)" d="M3 0h30v33H0V3q0-3 3-3zM37 0h30q3 0 3 3v30H37zM0 37h33v33H3q-3 0-3-3zM37 37h33v30q0 3-3 3H37z" />
    </Glyph>
    <SearchBox>
      <Glyph $w={44} $ml={31} viewBox="0 0 44 44" stroke="#e3e0de" strokeWidth="5"><circle cx="20" cy="19" r="16" fill="#5d544f" /><path d="M31 31l11 11" /></Glyph>
      <Label $ml={33} $w={126} $size={40} $ls={-0.5} $color="#cdc7c3">Search</Label>
      <Glyph $w={132} $h={68} $ml={268} viewBox="0 0 132 68">
        <path stroke="#f1cf1c" strokeWidth="7" strokeLinecap="butt" d="M34 49 60 60" /><path stroke="#8090d0" strokeWidth="4" d="M61 55v9" />
        <path fill="#6a6ec8" d="M16 16q16 2 18 20v18L16 50z" /><circle cx="16" cy="34" r="15" fill="#f07050" /><circle cx="16" cy="34" r="8" stroke="#5d6cc0" strokeWidth="3" fill="#8a6cb0" />
        <path stroke="#a3a29a" strokeWidth="8" d="M65 24l9 38" /><path stroke="#a3a29a" strokeWidth="5" d="M55 7q0 16 8 16 9-2 4-20" />
        <path stroke="#d09a68" strokeWidth="9" d="M94 16v46" /><path stroke="#b7b7c4" strokeWidth="10" strokeLinecap="butt" d="M80 6h20q9 1 12 10" />
        <path stroke="#a9a7b5" strokeWidth="3" d="M126 6l-4 32" /><path stroke="#b0627c" strokeWidth="9" d="M121 42l-3 22" />
      </Glyph>
    </SearchBox>
    <AppRow>
      <AppSlot>
        <Glyph $w={72} $h={66} $dy={-1} viewBox="0 0 72 66">
          <rect x="18" width="54" height="48" rx="3" fill="#f4f4f4" /><rect y="18" width="55" height="48" rx="3" fill="#6e6e6e" fillOpacity=".85" />
          <path fill="#b7b7b7" d="M18 18h37v30H18z" />
        </Glyph>
      </AppSlot>
      <AppSlot>
        <Glyph $w={68} viewBox="0 0 68 68">
          <defs><linearGradient id="tm" x1="0" y1="0" x2="1" y2="1"><stop stopColor="#9a6aa8" /><stop offset=".5" stopColor="#6f62c4" /><stop offset="1" stopColor="#4f52d0" /></linearGradient></defs>
          <path fill="url(#tm)" d="M34 0a34 34 0 1 1-16 64L1 67l2-17A34 34 0 0 1 34 0z" /><rect x="14" y="20" width="28" height="28" rx="5" fill="#fff" /><path fill="#fff" d="M45 30l9-7v22l-9-7z" />
        </Glyph>
      </AppSlot>
      <AppSlot $dot="#a39b95">
        <Glyph $w={72} viewBox="0 0 72 72">
          <path fill="#e33b2e" d="M5 18a36 36 0 0 1 62 0H36L20 46z" /><path fill="#fdc12c" d="M67 18a36 36 0 0 1-31 54l16-27q5-13-4-27z" />
          <path fill="#2a9c4b" d="M5 18a36 36 0 0 0 31 54l14-25q-16 10-30-3z" /><circle cx="36" cy="36" r="18" fill="#fff" /><circle cx="36" cy="36" r="14" fill="#3478ec" />
        </Glyph>
      </AppSlot>
      <AppSlot>
        <Glyph $w={70} viewBox="0 0 70 70">
          <path stroke="#28aef0" strokeWidth="4" d="M19 18V2h32v16" /><path fill="#f4f4f4" d="M0 9h70v52q0 9-9 9H9q-9 0-9-9z" />
          <path stroke="#28aef0" strokeWidth="4" d="M19 9v5M51 9v5" />
          <path fill="#f25022" d="M20 24h14v14H20z" /><path fill="#7fba00" d="M36 24h14v14H36z" /><path fill="#00a4ef" d="M20 40h14v14H20z" /><path fill="#ffb900" d="M36 40h14v14H36z" />
        </Glyph>
      </AppSlot>
      <AppSlot $active $dot="#60cdff" $dotW={48}>
        <Glyph $w={72} viewBox="0 0 72 72">
          <defs>
            <linearGradient id="eg" x1="0" y1="0" x2="1" y2=".5"><stop stopColor="#36b9f2" /><stop offset=".5" stopColor="#35c9c8" /><stop offset="1" stopColor="#63dc52" /></linearGradient>
            <linearGradient id="eb" x1="0" y1="0" x2="1" y2="1"><stop stopColor="#1e9de0" /><stop offset="1" stopColor="#0a5fbb" /></linearGradient>
          </defs>
          <path fill="url(#eg)" d="M1 30Q6 0 37 0q32 3 35 32 0 16-17 16-13 0-9-8 6-8-2-16Q32 12 16 18 5 22 1 30z" />
          <path fill="url(#eb)" d="M0 36Q3 17 21 17q17 1 20 11-12-2-15 11-2 15 12 21 14 5 28-4 3 0 1 4-10 13-30 12Q3 69 0 36z" />
          <path fill="#124b96" d="M26 36q-5 18 12 25 14 4 28-5 3 0 1 4-10 13-27 12-22-4-22-22 0-9 8-14z" />
        </Glyph>
      </AppSlot>
      <AppSlot>
        <Glyph $w={72} viewBox="0 0 72 72">
          <path fill="#0a70b8" d="M2 21l5-4q2-1 4 0l43 33v19z" /><path fill="#0c86d4" d="M2 51l5 4q2 1 4 0L54 22V2z" /><path fill="#23a0ee" d="M51 0 72 9v54L51 72q3-2 3-5V5q0-3-3-5z" />
        </Glyph>
      </AppSlot>
      <AppSlot $dot="#a39b95">
        <Glyph $w={70} $h={64} viewBox="0 0 70 64">
          <path fill="#e0a106" d="M0 3q0-3 3-3h20l8 8H0z" /><path fill="#fcc937" d="M0 12h24l8-5h35q3 0 3 3v51q0 3-3 3H3q-3 0-3-3z" />
          <path fill="#1283d8" d="M10 64V50q0-6 6-6h38q6 0 6 6v14z" /><path stroke="#0b5da5" strokeWidth="4" d="M22 54h26" />
        </Glyph>
      </AppSlot>
      <AppSlot $dot="#a39b95">
        <Glyph $w={72} viewBox="0 0 72 72"><circle cx="36" cy="36" r="36" fill="#1fd760" /><path stroke="#111" strokeWidth="7" d="M14 24q24-7 46 5M16 37q21-6 40 4M18 49q18-4 34 4" /></Glyph>
      </AppSlot>
      <AppSlot $dot="#a39b95">
        <Glyph $w={72} viewBox="0 0 72 72">
          <path fill="#fff" d="M36 0a36 36 0 1 1-17 67L0 72l5-18A36 36 0 0 1 36 0z" /><path fill="#40b84a" d="M36 7a29 29 0 1 1-15 54l-11 3 3-11A29 29 0 0 1 36 7z" />
          <path fill="#fff" d="M24 18q3-1 5 1l4 8q0 2-4 6 4 8 12 12l5-5q2 0 9 4 1 8-8 10-8 1-19-9-11-11-9-19 1-6 5-8z" />
        </Glyph>
        <CountPill>48</CountPill>
      </AppSlot>
    </AppRow>
    <Glyph $w={32} $h={18} $ml={64} viewBox="0 0 32 18" stroke="#fff" strokeWidth="3.200"><path d="M2 16 16 2l14 14" /></Glyph>
    <Glyph $w={48} $h={38} $ml={57} viewBox="0 0 48 38"><path fill="#8a8887" d="M10 34q-10-2-9-12 1-8 10-9Q15 2 26 3q11 2 12 12 10 1 10 10t-9 9z" /><path stroke="#fff" strokeWidth="3.200" d="M4 0l40 38" /></Glyph>
    <TwoLines $ml={51} $w={76} $align="center" $ls={-0.4}><span>ENG</span><span>IN</span></TwoLines>
    <Glyph $w={48} $h={34} $ml={50} $dy={-1} viewBox="0 0 48 34" stroke="#fff" strokeWidth="3.200"><path d="M2 10q22-18 44 0M9 18q15-12 30 0M16 25q8-6 16 0" /><circle cx="24" cy="30" r="3.500" fill="#fff" stroke="none" /></Glyph>
    <Glyph $w={50} $h={40} $ml={24} $dy={-1} viewBox="0 0 50 40" stroke="#fff" strokeWidth="3.200"><path d="M2 13h8L22 3v34L10 27H2zM29 13q5 7 0 14M36 8q8 12 0 24M42 2q13 18 0 36" /></Glyph>
    <Glyph $w={48} $h={30} $ml={22} $dy={-1} viewBox="0 0 48 30" stroke="#fff" strokeWidth="3.200"><rect x="2" y="2" width="40" height="26" rx="6" /><path d="M46 11v8" /><path strokeWidth="6" strokeLinecap="butt" d="M12 8v14" /></Glyph>
    <TwoLines $ml={44} $w={192} $align="right" $ls={-0.25}><span>09:42 PM</span><span>30-10-2023</span></TwoLines>
    <Glyph $w={38} $h={46} $ml={28} viewBox="0 0 38 46"><path fill="#99ebff" d="M19 0q14 1 14 15v9l5 9v3H0v-3l5-9v-9Q5 1 19 0zM12 39h14q-2 7-7 7t-7-7z" /></Glyph>
  </TaskRow>
);

export default function App() {
  return (
    <Screen>
      <GlobalStyle />
      <Titlebar />
      <AddressBar />
      <Body>
        <AppPanel>
          <Header />
          <Toolbar />
          <PdfToolbar />
          <Viewer>
            <Paper>
              <TreemapWidget />
              <RadialChart />
            </Paper>
            <ScrollTrack>
              <Arrow />
              <Thumb />
              <Arrow $down />
            </ScrollTrack>
          </Viewer>
        </AppPanel>
        <Sidebar />
      </Body>
      <FrameEdge />
      <Taskbar />
    </Screen>
  );
}
